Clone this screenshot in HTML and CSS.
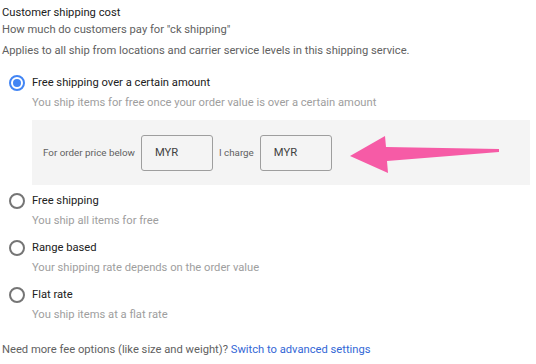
FILE: index.html
```html
<!DOCTYPE html>
<html>
<head>
    <title>Customer shipping cost</title>
    <link rel="stylesheet" href="styles.css">
</head>
<body>
    <div class="page">
        <div class="title">Customer shipping cost</div>
        <div class="question">How much do customers pay for "ck shipping"</div>
        <div class="note">Applies to all ship from locations and carrier service levels in this shipping service.</div>

        <div class="options">
            <div class="option">
                <span class="radio checked"></span>
                <div class="option-text">
                    <div class="option-label">Free shipping over a certain amount</div>
                    <div class="option-sub">You ship items for free once your order value is over a certain amount</div>
                </div>
            </div>
            <div class="threshold">
                <span class="field-label">For order price below</span>
                <div class="money">MYR</div>
                <span class="field-label">I charge</span>
                <div class="money">MYR</div>
                <svg class="arrow" width="152" height="42" viewBox="0 0 152 42">
                    <polygon points="2,23 37,3 38,14 151,16 151,19 39,28 40,40" fill="#f65ba6"/>
                </svg>
            </div>
            <div class="option">
                <span class="radio"></span>
                <div class="option-text">
                    <div class="option-label">Free shipping</div>
                    <div class="option-sub">You ship all items for free</div>
                </div>
            </div>
            <div class="option">
                <span class="radio"></span>
                <div class="option-text">
                    <div class="option-label">Range based</div>
                    <div class="option-sub">Your shipping rate depends on the order value</div>
                </div>
            </div>
            <div class="option">
                <span class="radio"></span>
                <div class="option-text">
                    <div class="option-label">Flat rate</div>
                    <div class="option-sub">You ship items at a flat rate</div>
                </div>
            </div>
        </div>

        <div class="more">Need more fee options (like size and weight)? <a href="#">Switch to advanced settings</a></div>
    </div>
</body>
</html>
```

FILE: styles.css
```css
body {
    margin: 0;
    background: #fff;
    font-family: Roboto, "Liberation Sans", sans-serif;
    font-size: 11.2px;
}
.page {
    padding: 4px 0 0 2px;
}
.title {
    color: #212121;
    line-height: 17px;
}
.question {
    color: #616161;
    line-height: 17px;
}
.note {
    color: #616161;
    line-height: 18px;
    margin-top: 4px;
}
.options {
    margin-top: 13px;
}
.option {
    display: flex;
    margin-bottom: 7px;
}
.radio {
    box-sizing: border-box;
    width: 16px;
    height: 16px;
    margin: 2px 7px 0 7px;
    border: 2px solid #757575;
    border-radius: 50%;
    flex-shrink: 0;
}
.radio.checked {
    border-color: #4285f4;
    position: relative;
}
.radio.checked::after {
    content: "";
    position: absolute;
    left: 2px;
    top: 2px;
    width: 8px;
    height: 8px;
    border-radius: 50%;
    background: #4285f4;
}
.option-label {
    color: #212121;
    line-height: 20px;
}
.option-sub {
    color: #9e9e9e;
    line-height: 20px;
}
.threshold {
    display: flex;
    align-items: center;
    margin: 5px 6px 6px 30px;
    padding: 0 11px;
    height: 65px;
    background: #f4f4f4;
}
.field-label {
    color: #616161;
    font-size: 9.8px;
}
.money {
    box-sizing: border-box;
    width: 72px;
    height: 36px;
    margin: 0 6px;
    padding-left: 13px;
    line-height: 34px;
    border: 1px solid #9e9e9e;
    border-radius: 3px;
    color: #424242;
    background: #f4f4f4;
}
.arrow {
    margin-left: 10px;
    margin-top: 2px;
}
.more {
    color: #616161;
    line-height: 20px;
    margin-top: 15px;
}
.more a {
    color: #3367d6;
    text-decoration: none;
}
```
